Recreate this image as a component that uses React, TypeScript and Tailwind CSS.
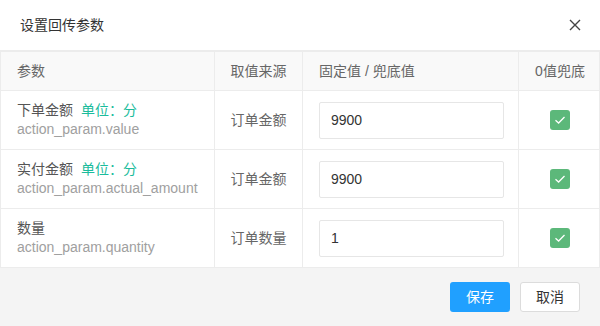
const rows = [
  { name: '下单金额', unit: true, key: 'action_param.value', source: '订单金额', value: '9900' },
  { name: '实付金额', unit: true, key: 'action_param.actual_amount', source: '订单金额', value: '9900' },
  { name: '数量', unit: false, key: 'action_param.quantity', source: '订单数量', value: '1' },
];

const cols = 'grid grid-cols-[214px_88px_216px_82px]';

const Check = () => (
  <span className="w-[20px] h-[20px] rounded-[3px] bg-[#5cb87a] flex items-center justify-center">
    <svg width="12" height="10" viewBox="0 0 12 10" fill="none">
      <path d="M1.5 5.2 L4.6 8 L10.5 2" stroke="#fff" strokeWidth="1.3" />
    </svg>
  </span>
);

export default function App() {
  return (
    <div className="w-[600px] h-[326px] bg-white flex flex-col text-[14px] font-['Liberation_Sans','Noto_Sans_CJK_SC',sans-serif]">
      <div className="h-[50px] pl-5 pr-[19px] flex items-center justify-between">
        <span className="text-[#333]">设置回传参数</span>
        <svg width="12" height="12" viewBox="0 0 12 12">
          <path d="M1 1 L11 11 M11 1 L1 11" stroke="#444" strokeWidth="1.4" />
        </svg>
      </div>

      <div className="border-t-2 border-[#ececec] border-x border-x-[#ececec]">
        <div className={`${cols} h-[39px] bg-[#f9f9f9] text-[#666] border-b border-[#ececec]`}>
          <div className="pl-4 flex items-center border-r border-[#ececec]">参数</div>
          <div className="flex items-center justify-center border-r border-[#ececec]">取值来源</div>
          <div className="pl-4 flex items-center border-r border-[#ececec]">固定值 / 兜底值</div>
          <div className="flex items-center justify-center">0值兜底</div>
        </div>
        {rows.map((r) => (
          <div key={r.key} className={`${cols} h-[59px] border-b border-[#ececec]`}>
            <div className="pl-4 flex flex-col justify-center leading-[19px] border-r border-[#ececec]">
              <div className="text-[#555]">
                {r.name}
                {r.unit && <span className="ml-2 text-[#1abc9c]">单位：分</span>}
              </div>
              <div className="text-[#a0a0a0]">{r.key}</div>
            </div>
            <div className="flex items-center justify-center text-[#666] border-r border-[#ececec]">{r.source}</div>
            <div className="pl-4 flex items-center border-r border-[#ececec]">
              <div className="w-[185px] h-[37px] border border-[#e6e6e6] rounded-[2px] pl-[11px] flex items-center text-[#333]">
                {r.value}
              </div>
            </div>
            <div className="flex items-center justify-center">
              <Check />
            </div>
          </div>
        ))}
      </div>

      <div className="flex-1 bg-[#f4f4f4] flex items-center justify-end gap-[10px] pr-5">
        <button className="w-[60px] h-[30px] rounded-[3px] bg-[#20a0ff] text-white">保存</button>
        <button className="w-[60px] h-[30px] rounded-[3px] bg-white border border-[#dcdcdc] text-[#333]">取消</button>
      </div>
    </div>
  );
}
